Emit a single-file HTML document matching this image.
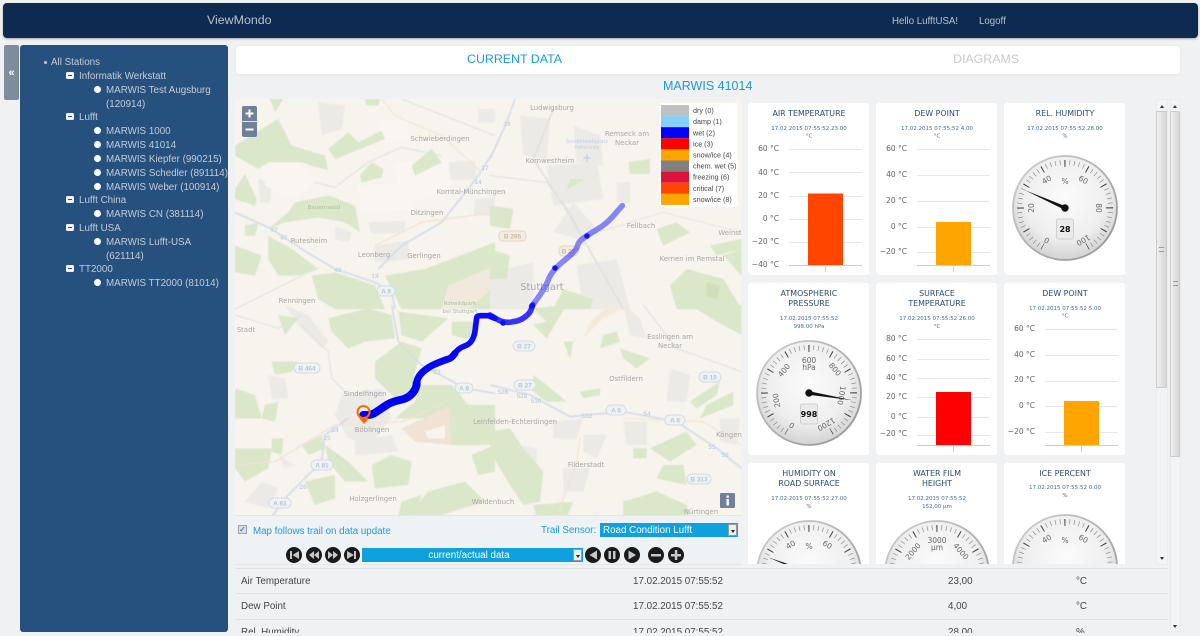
<!DOCTYPE html>
<html><head><meta charset="utf-8"><title>ViewMondo</title>
<style>
*{box-sizing:border-box}
html,body{margin:0;padding:0;width:1200px;height:636px;overflow:hidden;background:#eff1f3;font-family:"Liberation Sans",sans-serif}
.a{position:absolute;white-space:nowrap}
#nav{left:3px;top:3px;width:1195px;height:35px;background:#0e2a50;border-radius:4px;box-shadow:0 1px 2px rgba(0,0,0,.3)}
#side{left:20px;top:45px;width:208px;height:587px;background:#26517f;border-radius:3px}
#tog{left:4px;top:45px;width:15px;height:55px;background:#7f8c9c;border-radius:2px;color:#fff;font-size:11px;font-weight:bold;text-align:center;line-height:56px}
.t{position:absolute;font-size:9.8px;color:#c3cbd5;white-space:nowrap;line-height:14px}
.g{position:absolute;left:66px;width:8px;height:7px;background:#f2f4f6;border-radius:1.5px}
.g:after{content:"";position:absolute;left:2px;top:3px;width:4px;height:1px;background:#26517f}
.d{position:absolute;left:94px;width:7px;height:7px;border-radius:50%;background:#fff}
#tabs{left:236px;top:46px;width:944px;height:28px;background:#fff;border-radius:3px;box-shadow:0 1px 3px rgba(0,0,0,.06)}
.sb{position:absolute;background:#f2f3f4;border:1px solid #eaebec}
.th{position:absolute;background:linear-gradient(90deg,#efefef,#d6d6d6);border:1px solid #cbcbcb;border-radius:1px}
.row{position:absolute;left:236px;width:932px;height:26px;border-top:1px solid #dfe2e5;font-size:9.8px;color:#444}
.row span{position:absolute;top:6px;line-height:13px;white-space:nowrap}
svg text{font-family:"DejaVu Sans",sans-serif}
svg .ls text{font-family:"Liberation Sans",sans-serif}
.sel{position:absolute;background:#0fa0de;color:#fff;font-size:9.8px;line-height:15px}
.sel i{position:absolute;right:1px;top:1px;bottom:1px;width:9px;background:#eceff1;border:1px solid #999}
.sel i:after{content:"";position:absolute;left:1.5px;top:5px;border:2.5px solid transparent;border-top:3px solid #222}
</style></head><body>
<div class="a" id="nav"></div>
<div class="a" style="left:207px;top:13px;font-size:12.4px;color:#b9c1cb;line-height:15px">ViewMondo</div>
<div class="a" style="left:892px;top:15px;font-size:9.7px;color:#b9c1cb;line-height:13px">Hello LufftUSA!</div>
<div class="a" style="left:979px;top:15px;font-size:9.7px;color:#b9c1cb;line-height:13px">Logoff</div>

<div class="a" id="tog">«</div>
<div class="a" id="side"></div>
<div class="a" style="left:44px;top:61px;width:3px;height:3px;border-radius:50%;background:#c3cbd5"></div>
<div class="t" style="left:51px;top:56px">All Stations</div>
<div class="g" style="top:72px"></div><div class="t" style="left:79px;top:70px">Informatik Werkstatt</div>
<div class="d" style="top:86px"></div><div class="t" style="left:106px;top:84px">MARWIS Test Augsburg</div>
<div class="t" style="left:106px;top:98px">(120914)</div>
<div class="g" style="top:113px"></div><div class="t" style="left:79px;top:111px">Lufft</div>
<div class="d" style="top:127px"></div><div class="t" style="left:106px;top:125px">MARWIS 1000</div>
<div class="d" style="top:141px"></div><div class="t" style="left:106px;top:139px">MARWIS 41014</div>
<div class="d" style="top:155px"></div><div class="t" style="left:106px;top:153px">MARWIS Kiepfer (990215)</div>
<div class="d" style="top:169px"></div><div class="t" style="left:106px;top:167px">MARWIS Schedler (891114)</div>
<div class="d" style="top:183px"></div><div class="t" style="left:106px;top:181px">MARWIS Weber (100914)</div>
<div class="g" style="top:196px"></div><div class="t" style="left:79px;top:194px">Lufft China</div>
<div class="d" style="top:210px"></div><div class="t" style="left:106px;top:208px">MARWIS CN (381114)</div>
<div class="g" style="top:224px"></div><div class="t" style="left:79px;top:222px">Lufft USA</div>
<div class="d" style="top:238px"></div><div class="t" style="left:106px;top:236px">MARWIS Lufft-USA</div>
<div class="t" style="left:106px;top:250px">(621114)</div>
<div class="g" style="top:265px"></div><div class="t" style="left:79px;top:263px">TT2000</div>
<div class="d" style="top:279px"></div><div class="t" style="left:106px;top:277px">MARWIS TT2000 (81014)</div>

<div class="a" id="tabs"></div>
<div class="a" style="left:467px;top:52px;font-size:12.4px;color:#1b9ad8;line-height:15px">CURRENT DATA</div>
<div class="a" style="left:953px;top:52px;font-size:12.4px;color:#c9c9c9;line-height:15px">DIAGRAMS</div>
<div class="a" style="left:663px;top:79px;font-size:12.5px;color:#1b9ad8;line-height:15px">MARWIS 41014</div>

<!-- MAP -->
<svg class="a" style="left:235px;top:99px" width="507" height="416" viewBox="235 99 507 416">
<defs><filter id="bl" x="-2%" y="-2%" width="104%" height="104%"><feGaussianBlur stdDeviation="0.6"/></filter></defs>
<rect x="235" y="99" width="507" height="416" fill="#f7f3ed"/>
<g filter="url(#bl)">
<g transform="translate(235,99) scale(.3333)">
<g fill="#eceae7">
<polygon points="130,230 200,225 205,270 140,275"/><polygon points="400,370 510,365 510,400 410,405"/><polygon points="640,190 720,185 725,240 650,245"/><polygon points="720,300 780,295 780,350 715,350"/><polygon points="420,440 520,425 525,480 420,490"/><polygon points="70,240 110,250 105,310 75,310"/><polygon points="380,270 410,270 410,300 380,300"/><polygon points="475,280 525,280 525,310 475,305"/><polygon points="300,380 350,400 340,430 300,420"/><polygon points="250,10 330,20 320,90 260,110"/><polygon points="730,30 780,30 780,70 730,70"/>
</g>
<g fill="#f9f6f1">
<polygon points="440,60 520,70 520,130 430,130"/><polygon points="80,190 210,190 240,250 170,300 90,260"/><polygon points="480,190 640,180 640,270 500,320"/><polygon points="370,260 520,250 530,330 380,340"/>
</g>
<g fill="#dae7c9">
<polygon points="0,140 130,60 170,140 270,170 280,215 200,190 100,190 70,210 0,170"/>
<polygon points="280,150 340,100 370,130 440,95 450,120 350,160 300,180"/>
<polygon points="375,230 410,190 445,210 440,235 380,250"/>
<polygon points="180,310 280,290 360,320 375,400 330,370 250,355 150,370 100,390 160,340"/>
<polygon points="0,270 30,225 65,300 60,320 0,300"/>
<polygon points="100,410 170,450 250,510 190,530 130,530 100,480"/>
<polygon points="0,440 80,470 60,530 0,520"/>
<polygon points="230,530 300,520 420,560 450,630 300,630 250,600"/>
<polygon points="450,530 570,510 780,430 780,630 500,630"/>
<polygon points="530,200 590,150 620,190 540,230"/>
<polygon points="105,0 145,0 120,40"/><polygon points="390,0 435,0 430,20 395,20"/>
<polygon points="30,380 70,370 60,410 30,410"/>
</g>
<g fill="#f1e9dd"><polygon points="640,560 780,500 780,560 700,630 620,630"/></g>
</g>
<g transform="translate(490,99) scale(.3333)">
<g fill="#eceae7">
<polygon points="90,50 180,60 170,180 100,170"/><polygon points="170,200 320,190 340,300 190,320"/><polygon points="380,250 420,250 420,310 380,310"/><polygon points="250,310 330,400 270,420 190,400"/><polygon points="0,520 130,490 130,630 0,630"/><polygon points="260,500 380,480 420,630 280,630"/><polygon points="250,80 330,110 340,200 260,190"/>
</g>
<g fill="#dae7c9">
<polygon points="0,320 70,330 60,390 0,380"/><polygon points="415,190 480,180 480,225 420,225"/><polygon points="240,240 290,240 230,270"/><polygon points="0,450 60,470 50,540 0,540"/><polygon points="590,510 700,540 755,630 560,630 540,560"/><polygon points="220,570 310,600 300,630 190,630"/><polygon points="700,470 755,450 755,530"/><polygon points="500,390 560,370 600,400 520,440"/><polygon points="660,440 755,420 755,450 680,470"/>
</g>
<g fill="#cfdfba"><polygon points="650,550 690,560 680,600 650,590"/></g>
</g>
<g transform="translate(235,305) scale(.3333)">
<g fill="#eceae7">
<polygon points="320,270 440,250 470,340 400,420 340,400 300,330"/><polygon points="360,410 470,390 490,440 360,450"/><polygon points="100,210 150,220 160,280 110,280"/><polygon points="150,0 220,30 280,110 260,130 190,60"/><polygon points="80,530 130,550 100,610 30,590"/><polygon points="130,450 180,480 150,490"/>
</g>
<g fill="#dae7c9">
<polygon points="280,40 400,10 470,30 480,100 390,110 340,130 290,80"/><polygon points="490,20 640,40 560,110 500,90"/><polygon points="650,50 720,50 720,110 650,90"/><polygon points="420,170 500,110 560,130 540,200 530,270 480,280 420,220"/><polygon points="560,240 650,240 700,300 780,300 780,420 650,420 600,340 480,340 540,290"/><polygon points="0,250 60,270 80,340 0,340"/><polygon points="90,300 130,290 120,350 80,340"/><polygon points="110,170 190,170 170,200 120,210"/><polygon points="200,420 260,390 270,430 220,450"/><polygon points="0,430 110,430 100,490 30,530 0,490"/><polygon points="110,400 145,400 140,450 110,440"/><polygon points="270,420 340,470 400,530 330,530 280,470"/><polygon points="210,530 300,510 300,580 240,600"/><polygon points="410,480 470,450 530,470 520,540 420,550"/><polygon points="580,560 690,530 750,590 620,630 520,630"/><polygon points="710,450 780,420 780,500 730,510"/><polygon points="130,30 190,40 150,90"/><polygon points="500,590 560,570 540,636 490,636"/>
</g>
<polygon points="500,370 640,305 650,420 540,410" fill="#f0e2d5"/>
<polygon points="570,380 630,360 630,400 580,400" fill="#f8f4ee"/>
</g>
<g transform="translate(490,305) scale(.3333)">
<g fill="#eceae7">
<polygon points="400,0 450,40 470,100 420,90"/><polygon points="540,190 600,210 590,290 530,290"/><polygon points="400,350 470,350 470,420 410,420"/><polygon points="190,350 280,340 260,400 190,400"/><polygon points="280,390 350,390 320,460 280,440"/><polygon points="690,340 750,340 740,420 690,410"/><polygon points="220,490 300,490 280,560 220,560"/><polygon points="90,420 140,430 140,480 90,480"/>
</g>
<g fill="#dae7c9">
<polygon points="130,10 230,0 170,100 130,60 170,50"/><polygon points="220,110 250,110 240,160"/><polygon points="130,210 170,240 230,290 170,290 130,260"/><polygon points="270,260 330,250 330,270 280,280"/><polygon points="340,90 380,80 390,110 330,130"/><polygon points="390,130 480,160 440,190 400,160"/><polygon points="600,0 755,0 755,90 680,50"/><polygon points="600,290 690,230 680,270 620,310"/><polygon points="650,300 730,260 730,300 630,340"/><polygon points="480,430 590,380 620,420 540,470"/><polygon points="430,430 470,430 470,460 430,460"/><polygon points="0,380 60,370 100,430 160,500 150,590 100,600 60,540 0,440"/><polygon points="520,480 580,480 590,540 500,520"/><polygon points="130,600 250,590 230,636 140,636"/><polygon points="400,590 500,560 590,600 600,636 400,636"/>
</g>
<polygon points="280,100 340,40 420,0 360,0 300,50" fill="#f3eadd"/>
</g>
</g>
<!-- roads -->
<g fill="none" stroke-linejoin="round" filter="url(#bl)">
<g transform="translate(235,99) scale(.3333)">
<path d="M0,340 L110,390 L200,450 L300,510 L420,550 L470,580 L480,630" stroke="#d2dde8" stroke-width="5"/>
<path d="M780,150 L730,230 L620,370 L500,440 L430,510" stroke="#d2dde8" stroke-width="5"/>
<path d="M500,0 L780,110" stroke="#e2e2e1" stroke-width="3.500"/>
<path d="M240,250 L300,265 L400,190 L500,145 L620,170" stroke="#e2e2e1" stroke-width="3.500"/>
<path d="M440,0 L480,50 L620,110 L740,220" stroke="#f3e5d5" stroke-width="3.500"/>
<path d="M420,440 L560,370 L780,340" stroke="#f2e2d2" stroke-width="3.500"/>
<path d="M0,630 L240,510" stroke="#e2e2e1" stroke-width="3.500"/>
</g>
<g transform="translate(235,305) scale(.3333)">
<path d="M470,0 L490,110 L560,180 L690,250 L780,265" stroke="#d2dde8" stroke-width="5"/>
<path d="M340,340 L270,390 L260,470 L150,580 L110,636" stroke="#d2dde8" stroke-width="5"/>
<path d="M200,60 L280,140 L290,220 L340,270" stroke="#e2e2e1" stroke-width="3.500"/>
<path d="M0,480 L120,470 L300,360 L500,350 L660,280" stroke="#f2e2d2" stroke-width="3.500"/>
<path d="M0,30 L130,70 L200,30" stroke="#e2e2e1" stroke-width="3"/>
</g>
<g transform="translate(490,305) scale(.3333)">
<path d="M0,240 L120,270 L240,335 L400,320 L560,350 L680,430 L755,490" stroke="#d2dde8" stroke-width="5"/>
<path d="M460,0 L560,130 L755,200" stroke="#e2e2e1" stroke-width="3.500"/>
<path d="M270,400 L260,470 L200,636" stroke="#f2e2d2" stroke-width="3.500"/>
<path d="M400,340 L640,350 L755,420" stroke="#f3e5d5" stroke-width="3.500"/>
</g>
<g transform="translate(490,99) scale(.3333)">
<path d="M75,0 L50,70 L0,180" stroke="#d2dde8" stroke-width="5"/>
<path d="M190,30 L130,180 L240,350 L400,630" stroke="#dfdfde" stroke-width="4.500"/>
<path d="M0,230 L170,250 L240,340 L280,420" stroke="#e2e2e1" stroke-width="3.500"/>
<path d="M290,410 L520,340 L755,400" stroke="#e6e6e4" stroke-width="3"/>
</g>
</g>
<g text-anchor="middle" font-size="6.900" fill="#a8a8a8">
<text x="440" y="141">Schwieberdingen</text><text x="552" y="110">Ludwigsburg</text><text x="627" y="136">Remseck am</text><text x="627" y="145">Neckar</text><text x="550" y="163">Kornwestheim</text><text x="471" y="194">Korntal-Münchingen</text><text x="427" y="215">Ditzingen</text><text x="309" y="243">Rutesheim</text><text x="374" y="257">Leonberg</text><text x="424" y="258">Gerlingen</text><text x="641" y="228">Fellbach</text><text x="730" y="235">Weinst</text><text x="692" y="261">Kernen im Remstal</text><text x="542" y="290" font-size="9.600">Stuttgart</text><text x="297" y="303">Renningen</text><text x="246" y="332">Stadt</text><text x="670" y="339">Esslingen am</text><text x="670" y="348">Neckar</text><text x="626" y="381">Ostfildern</text><text x="365" y="396">Sindelfingen</text><text x="372" y="432">Böblingen</text><text x="515" y="424">Leinfelden-Echterdingen</text><text x="729" y="437">Köngen</text><text x="586" y="467">Filderstadt</text><text x="373" y="501">Holzgerlingen</text><text x="493" y="504">Waldenbuch</text><text x="701" y="514">Nürtingen</text>
<g fill="#a9c2a0" font-size="5.500"><text x="324" y="209">Bauernwald</text><text x="460" y="305">Rotwildpark</text><text x="460" y="313">bei Stuttgart</text></g>
<g fill="#c0cfe0" font-size="4.800"><text x="587" y="143">Sonderlandeplatz</text><text x="587" y="149">Pattonville</text></g>
</g>
<path d="M587,153 l1,3.500 l3,1.500 v1 l-3,-.5 l-.5,2.500 l1,1 h-3 l1,-1 l-.5,-2.500 l-3,.5 v-1 l3,-1.500 z" fill="#c9d5e2"/>
<g class="ls" font-size="6.500" font-weight="bold" text-anchor="middle" fill="#c3d3e6">
<text x="274" y="232">47</text><text x="284" y="240">47</text><text x="338" y="272">46</text><text x="375" y="278">19</text><text x="485" y="170">17</text><text x="478" y="184">14</text><text x="507" y="126">16</text><text x="503" y="394">526</text><text x="522" y="398">528</text><text x="536" y="403">530</text><text x="587" y="418">532</text><text x="647" y="416">54</text><text x="712" y="449">55</text><text x="725" y="457">55</text><text x="335" y="432">24</text><text x="327" y="440">25</text><text x="303" y="489">26</text><text x="437" y="374">23</text>
</g>
<g class="ls" font-size="6.500" font-weight="bold" text-anchor="middle" fill="#b9c6d2">
<g fill="#eef2f5" stroke="#d3dce5"><rect x="377" y="286" width="18" height="10" rx="5"/><rect x="294" y="363" width="26" height="10" rx="5"/><rect x="513" y="341" width="22" height="10" rx="5"/><rect x="455" y="383" width="18" height="10" rx="5"/><rect x="514" y="380" width="22" height="10" rx="5"/><rect x="606" y="405" width="20" height="10" rx="5"/><rect x="665" y="415" width="20" height="10" rx="5"/><rect x="699" y="372" width="22" height="10" rx="5"/><rect x="311" y="460" width="22" height="10" rx="5"/><rect x="269" y="498" width="22" height="10" rx="5"/><rect x="687" y="474" width="24" height="10" rx="5"/></g>
<g fill="#f4ece2" stroke="#e6d6c4"><rect x="499" y="231" width="27" height="10" rx="4"/><rect x="559" y="246" width="19" height="10" rx="4"/></g>
<text x="386" y="293.500">A 8</text><text x="307" y="370.500">B 464</text><text x="524" y="348.500">B 27</text><text x="464" y="390.500">A 8</text><text x="525" y="387.500">B 27</text><text x="616" y="412.500">A 8</text><text x="675" y="422.500">A 8</text><text x="710" y="379.500">B 10</text><text x="322" y="467.500">A 81</text><text x="280" y="505.500">A 81</text><text x="699" y="481.500">B 313</text>
<text x="512.500" y="238.500" fill="#cdb9a3">B 295</text><text x="568.500" y="253.500" fill="#cdb9a3">B 27</text>
</g>
<!-- trail -->
<g fill="none" stroke-linecap="round" stroke-linejoin="round">
<path transform="translate(490,99) scale(.3333)" d="M125,622 Q165,570 175,542 Q185,515 222,485 Q260,455 262,442 Q265,430 277,420 Q290,410 320,392 Q350,375 373,347 L397,320" stroke="#2a2aff" stroke-opacity=".55" stroke-width="17"/>
<path transform="translate(490,305) scale(.3333)" d="M0,30 L20,42 Q40,55 65,51 Q90,48 105,36 Q120,25 124,12 L128,0" stroke="#1010ff" stroke-opacity=".85" stroke-width="17"/>
<path transform="translate(235,305) scale(.3333)" d="M660,145 Q670,130 687,124 Q705,118 712,104 Q720,90 722,62 L725,40 Q725,32 735,32 L760,32 L780,40" stroke="#0a0aff" stroke-width="17"/>
<path transform="translate(235,305) scale(.3333)" d="M545,235 Q545,220 562,202 Q580,185 605,175 Q630,165 640,162 Q650,160 660,145" stroke="#0505ff" stroke-width="21"/>
<path transform="translate(235,305) scale(.3333)" d="M385,330 L400,330 Q410,330 425,320 Q440,310 455,300 Q470,290 495,285 Q520,280 532,265 Q545,250 545,235" stroke="#0000ff" stroke-width="24"/>
</g>
<g fill="#1010ff"><circle cx="503" cy="323" r="2.800"/><circle cx="532" cy="306" r="2.800"/><circle cx="555" cy="268" r="2.800"/><circle cx="587" cy="236" r="2.800"/></g>
<path d="M359,418 L364,424 L369,418 Z" fill="#ff6a00"/>
<circle cx="363.500" cy="412" r="6" fill="none" stroke="#ff6a00" stroke-width="2"/>
<!-- zoom -->
<rect x="242" y="106" width="15" height="31" rx="2" fill="#6f8098"/><rect x="242" y="121" width="15" height="1" fill="#dfe3e8"/>
<rect x="245.500" y="112.500" width="8" height="2" fill="#fff"/><rect x="248.500" y="109.500" width="2" height="8" fill="#fff"/><rect x="245.500" y="128.500" width="8" height="2" fill="#fff"/>
<!-- info -->
<rect x="720" y="493" width="15" height="15" rx="1.500" fill="#6f8098"/><rect x="726.500" y="499" width="2.400" height="6.500" fill="#fff"/><rect x="726.500" y="495.500" width="2.400" height="2.200" fill="#fff"/>
<!-- legend -->
<rect x="660" y="103" width="78" height="104" rx="2" fill="#fff"/>
<g>
<rect x="661" y="105" width="28" height="11.100" fill="#c0c0c0"/><rect x="661" y="116.100" width="28" height="11.100" fill="#87cefa"/><rect x="661" y="127.200" width="28" height="11.100" fill="#0000ff"/><rect x="661" y="138.300" width="28" height="11.100" fill="#ff0000"/><rect x="661" y="149.400" width="28" height="11.100" fill="#ffa500"/><rect x="661" y="160.500" width="28" height="11.100" fill="#808080"/><rect x="661" y="171.600" width="28" height="11.100" fill="#dc143c"/><rect x="661" y="182.700" width="28" height="11.100" fill="#ff4500"/><rect x="661" y="193.800" width="28" height="11.100" fill="#ffa500"/>
</g>
<g class="ls" font-size="7.200" fill="#444">
<text x="693" y="113">dry (0)</text><text x="693" y="124.200">damp (1)</text><text x="693" y="135.300">wet (2)</text><text x="693" y="146.400">ice (3)</text><text x="693" y="157.500">snow/ice (4)</text><text x="693" y="168.600">chem. wet (5)</text><text x="693" y="179.700">freezing (6)</text><text x="693" y="190.800">critical (7)</text><text x="693" y="201.900">snow/ice (8)</text>
</g>
</svg>

<!-- Controls -->
<div class="a" style="left:235px;top:515px;width:507px;height:50px;background:#eff2f4;border-top:1px solid #e3e5e7;border-bottom:1px solid #e3e5e7"></div>
<div class="a" style="left:238px;top:525px;width:9px;height:9px;background:#d9dfe6;border:1px solid #9aa5b1;color:#33507a;font-size:8px;line-height:7px;text-align:center">✓</div>
<div class="a" style="left:253px;top:525px;font-size:9.75px;color:#1b9ad8;line-height:14px">Map follows trail on data update</div>
<div class="a" style="left:541px;top:524px;font-size:9.8px;color:#1b9ad8;line-height:14px">Trail Sensor:</div>
<div class="sel" style="left:600px;top:523px;width:138px;height:14px;padding-left:3px">Road Condition Lufft<i></i></div>
<div class="sel" style="left:362px;top:548px;width:221px;height:14px;text-align:center;padding-right:7px">current/actual data<i></i></div>
<svg class="a" style="left:284px;top:545px" width="400" height="20" viewBox="284 545 400 20">
<g fill="#1a1a1a"><circle cx="294" cy="555" r="8"/><circle cx="314" cy="555" r="8"/><circle cx="333" cy="555" r="8"/><circle cx="352" cy="555" r="8"/><circle cx="593" cy="555" r="8"/><circle cx="612" cy="555" r="8"/><circle cx="632" cy="555" r="8"/><circle cx="656" cy="555" r="8"/><circle cx="676" cy="555" r="8"/></g>
<g fill="#c8c8c8">
<rect x="290" y="551" width="2" height="8"/><path d="M299,551 V559 L292.500,555 Z"/>
<path d="M314,551 V559 L309,555 Z M319,551 V559 L314,555 Z"/>
<path d="M328,551 V559 L333,555 Z M333,551 V559 L338,555 Z"/>
<path d="M347,551 V559 L354,555 Z"/><rect x="354" y="551" width="2" height="8"/>
<path d="M597,550.500 V559.500 L589.500,555 Z"/>
<rect x="608.500" y="551" width="2.500" height="8"/><rect x="613" y="551" width="2.500" height="8"/>
<path d="M628.500,550.500 V559.500 L636,555 Z"/>
<rect x="651" y="554" width="10" height="2.500"/>
<rect x="671" y="554" width="10" height="2.500"/><rect x="674.800" y="550" width="2.500" height="10"/>
</g>
</svg>

<!-- Cards -->
<div class="a" style="left:744px;top:99px;width:390px;height:465px;overflow:hidden">
<svg width="390" height="465" viewBox="744 99 390 465" style="position:absolute;left:0;top:0;display:block">
<defs>
<radialGradient id="face" cx="50%" cy="40%" r="65%"><stop offset="0" stop-color="#fbfbfb"/><stop offset=".6" stop-color="#efefef"/><stop offset="1" stop-color="#cbcbcb"/></radialGradient>
<linearGradient id="rim" x1="0" y1="0" x2="1" y2="1"><stop offset="0" stop-color="#d0d0d0"/><stop offset="1" stop-color="#909090"/></linearGradient>
<g id="dial">
<circle r="52" fill="url(#face)" stroke="url(#rim)" stroke-width="1.800"/>
<path d="M-22.750,39.400 A45.500,45.500 0 1 1 22.750,39.400" fill="none" stroke="#8f8f8f" stroke-width="5" pathLength="300" stroke-dasharray=".9 5.100" stroke-dashoffset=".45"/>
<path d="M-22.250,38.540 A44.500,44.500 0 1 1 22.250,38.540" fill="none" stroke="#444" stroke-width="7" pathLength="300" stroke-dasharray="1.300 28.700" stroke-dashoffset=".65"/>
</g>
<g id="needle"><polygon points="-1.800,0 0,-44 1.800,0" fill="#111"/><circle r="3.700" fill="#111"/></g>
<g id="vbox"><rect x="-8.500" y="11" width="17" height="20" rx="2" fill="#eaeaea" stroke="#cfcfcf"/></g>
</defs>
<g fill="#fff">
<rect x="748" y="103" width="121" height="172" rx="3"/><rect x="876" y="103" width="121" height="172" rx="3"/><rect x="1004" y="103" width="121" height="172" rx="3"/>
<rect x="748" y="283" width="121" height="172" rx="3"/><rect x="876" y="283" width="121" height="172" rx="3"/><rect x="1004" y="283" width="121" height="172" rx="3"/>
<rect x="748" y="463" width="121" height="172" rx="3"/><rect x="876" y="463" width="121" height="172" rx="3"/><rect x="1004" y="463" width="121" height="172" rx="3"/>
</g>
<g font-size="7.900" fill="#274b6d" text-anchor="middle">
<text x="809" y="116">AIR TEMPERATURE</text><text x="937" y="116">DEW POINT</text><text x="1065" y="116">REL. HUMIDITY</text>
<text x="809" y="296">ATMOSPHERIC</text><text x="809" y="306">PRESSURE</text><text x="937" y="296">SURFACE</text><text x="937" y="306">TEMPERATURE</text><text x="1065" y="296">DEW POINT</text>
<text x="809" y="476">HUMIDITY ON</text><text x="809" y="486">ROAD SURFACE</text><text x="937" y="476">WATER FILM</text><text x="937" y="486">HEIGHT</text><text x="1065" y="476">ICE PERCENT</text>
</g>
<g font-size="5.500" fill="#3d6a96" text-anchor="middle">
<text x="809" y="130">17.02.2015 07:55:52 23.00</text><text x="809" y="137.500">°C</text>
<text x="937" y="130">17.02.2015 07:55:52 4.00</text><text x="937" y="137.500">°C</text>
<text x="1065" y="130">17.02.2015 07:55:52 28.00</text><text x="1065" y="137.500">%</text>
<text x="809" y="320">17.02.2015 07:55:52</text><text x="809" y="328">998.00 hPa</text>
<text x="937" y="320">17.02.2015 07:55:52 26.00</text><text x="937" y="328">°C</text>
<text x="1065" y="310">17.02.2015 07:55:52 5.00</text><text x="1065" y="317.500">°C</text>
<text x="809" y="500">17.02.2015 07:55:52 27.00</text><text x="809" y="508">%</text>
<text x="937" y="500">17.02.2015 07:55:52</text><text x="937" y="508">152.00 µm</text>
<text x="1065" y="489">17.02.2015 07:55:52 0.00</text><text x="1065" y="497">%</text>
</g>
<!-- charts -->
<g stroke="#e6e8ea" stroke-width="1">
<path d="M789,149.500H862M789,172.500H862M789,196.500H862M789,219.500H862M789,242.500H862"/>
<path d="M917,149.500H990M917,175.500H990M917,201.500H990M917,227.500H990M917,252.500H990"/>
<path d="M917,339.500H990M917,359.500H990M917,378.500H990M917,397.500H990M917,417.500H990M917,435.500H990"/>
<path d="M1045,329.500H1118M1045,355.500H1118M1045,381.500H1118M1045,406.500H1118M1045,432.500H1118"/>
</g>
<g stroke="#c0d0e0" stroke-width="1">
<path d="M789,265.500H862M825.500,265.500V272M917,265.500H990M953.500,265.500V272M917,445.500H990M953.500,445.500V452M1045,445.500H1118M1081.500,445.500V452"/>
</g>
<rect x="808" y="193.500" width="35" height="71.500" fill="#ff4500"/>
<rect x="936" y="222" width="35" height="43" fill="#ffa500"/>
<rect x="936" y="392" width="35" height="53" fill="#ff0000"/>
<rect x="1064" y="401" width="35" height="44" fill="#ffa500"/>
<g font-size="7.500" fill="#606060" text-anchor="end">
<text x="779" y="151">60 °C</text><text x="779" y="175">40 °C</text><text x="779" y="198">20 °C</text><text x="779" y="221">0 °C</text><text x="779" y="244">−20 °C</text><text x="779" y="267">−40 °C</text>
<text x="907" y="151">60 °C</text><text x="907" y="177">40 °C</text><text x="907" y="203">20 °C</text><text x="907" y="229">0 °C</text><text x="907" y="254">−20 °C</text>
<text x="907" y="341">80 °C</text><text x="907" y="361">60 °C</text><text x="907" y="380">40 °C</text><text x="907" y="399">20 °C</text><text x="907" y="419">0 °C</text><text x="907" y="436">−20 °C</text>
<text x="1035" y="331">60 °C</text><text x="1035" y="357">40 °C</text><text x="1035" y="382">20 °C</text><text x="1035" y="408">0 °C</text><text x="1035" y="434">−20 °C</text>
</g>
<!-- Gauge: rel humidity -->
<g transform="translate(1065,208)"><use href="#dial"/>
<g font-size="7.500" fill="#666" text-anchor="middle">
<text transform="translate(-17,-26) rotate(-30)">40</text><text transform="translate(17,-26) rotate(30)">60</text><text transform="translate(-31,0) rotate(-90)">20</text><text transform="translate(31,0) rotate(90)">80</text><text transform="translate(-17,30) rotate(-150)">0</text><text transform="translate(17,30) rotate(150)">100</text><text x="0" y="-24">%</text></g>
<use href="#vbox"/><text y="24" font-size="8" font-weight="bold" text-anchor="middle" fill="#111">28</text>
<use href="#needle" transform="rotate(-66)"/></g>
<!-- Gauge: pressure -->
<g transform="translate(809,393)"><use href="#dial"/>
<g font-size="7.500" fill="#666" text-anchor="middle">
<text transform="translate(-16,30) rotate(-150)">0</text><text transform="translate(-30,7) rotate(-100)">200</text><text transform="translate(-23,-21) rotate(-50)">400</text><text x="0" y="-30">600</text><text x="0" y="-23">hPa</text><text transform="translate(24,-22) rotate(50)">800</text><text transform="translate(30,2) rotate(100)">1000</text><text transform="translate(16,29) rotate(150)">1200</text></g>
<use href="#vbox"/><text y="24" font-size="8" font-weight="bold" text-anchor="middle" fill="#111">998</text>
<use href="#needle" transform="rotate(99.500)"/></g>
<!-- Gauge: humidity on road -->
<g transform="translate(809,573)"><use href="#dial"/>
<g font-size="7.500" fill="#666" text-anchor="middle">
<text transform="translate(-17,-26) rotate(-30)">40</text><text transform="translate(17,-26) rotate(30)">60</text><text x="0" y="-24">%</text></g>
<use href="#needle" transform="rotate(-69)"/></g>
<!-- Gauge: water film -->
<g transform="translate(937,573)"><use href="#dial"/>
<g font-size="7.500" fill="#666" text-anchor="middle">
<text transform="translate(-22,-20) rotate(-50)">2000</text><text x="0" y="-30">3000</text><text x="0" y="-23">µm</text><text transform="translate(22,-20) rotate(50)">4000</text></g>
</g>
<!-- Gauge: ice -->
<g transform="translate(1065,567)"><use href="#dial"/>
<g font-size="7.500" fill="#666" text-anchor="middle">
<text transform="translate(-17,-26) rotate(-30)">40</text><text transform="translate(17,-26) rotate(30)">60</text><text x="0" y="-24">%</text></g>
</g>
</svg>
</div>

<!-- Scrollbars -->
<div class="sb" style="left:1156px;top:99px;width:12px;height:466px"></div>
<div class="th" style="left:1156px;top:111px;width:11px;height:277px"></div>
<div class="a" style="left:1159px;top:247px;width:5px;height:5px;border-top:1px solid #999;border-bottom:1px solid #999"></div>
<div class="a" style="left:1160px;top:103px;border:2px solid transparent;border-bottom:3px solid #333"></div>
<div class="a" style="left:1160px;top:557px;border:2px solid transparent;border-top:3px solid #333"></div>
<div class="sb" style="left:1170px;top:99px;width:11px;height:533px"></div>
<div class="th" style="left:1170px;top:111px;width:10px;height:346px"></div>
<div class="a" style="left:1173px;top:281px;width:5px;height:5px;border-top:1px solid #999;border-bottom:1px solid #999"></div>
<div class="a" style="left:1173px;top:103px;border:2px solid transparent;border-bottom:3px solid #333"></div>
<div class="a" style="left:1173px;top:625px;border:2px solid transparent;border-top:3px solid #333"></div>

<!-- Table -->
<div class="a" style="left:236px;top:565px;width:932px;height:68px;overflow:hidden;background:#eff1f3">
<div class="row" style="left:0;top:3px"><span style="left:5px">Air Temperature</span><span style="left:397px">17.02.2015 07:55:52</span><span style="left:712px">23,00</span><span style="left:840px">°C</span></div>
<div class="row" style="left:0;top:28px"><span style="left:5px">Dew Point</span><span style="left:397px">17.02.2015 07:55:52</span><span style="left:712px">4,00</span><span style="left:840px">°C</span></div>
<div class="row" style="left:0;top:54px"><span style="left:5px">Rel. Humidity</span><span style="left:397px">17.02.2015 07:55:52</span><span style="left:712px">28,00</span><span style="left:840px">%</span></div>
</div>
</body></html>
